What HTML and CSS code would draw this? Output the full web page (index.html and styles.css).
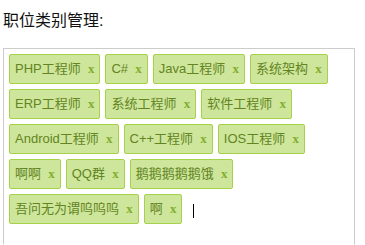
FILE: index.html
```html
<!DOCTYPE html>
<html>
<head>
<meta charset="utf-8">
<link rel="stylesheet" href="styles.css">
</head>
<body>
<div class="page">
  <div class="title">职位类别管理:</div>
  <div class="tagsinput">
    <span class="tag"><span class="label">PHP工程师&nbsp;&nbsp;</span><a class="rm">x</a></span>
    <span class="tag"><span class="label">C#&nbsp;&nbsp;</span><a class="rm">x</a></span>
    <span class="tag"><span class="label">Java工程师&nbsp;&nbsp;</span><a class="rm">x</a></span>
    <span class="tag"><span class="label">系统架构&nbsp;&nbsp;</span><a class="rm">x</a></span>
    <span class="tag"><span class="label">ERP工程师&nbsp;&nbsp;</span><a class="rm">x</a></span>
    <span class="tag"><span class="label">系统工程师&nbsp;&nbsp;</span><a class="rm">x</a></span>
    <span class="tag"><span class="label">软件工程师&nbsp;&nbsp;</span><a class="rm">x</a></span>
    <span class="tag"><span class="label">Android工程师&nbsp;&nbsp;</span><a class="rm">x</a></span>
    <span class="tag"><span class="label">C++工程师&nbsp;&nbsp;</span><a class="rm">x</a></span>
    <span class="tag"><span class="label">IOS工程师&nbsp;&nbsp;</span><a class="rm">x</a></span>
    <span class="tag"><span class="label">啊啊&nbsp;&nbsp;</span><a class="rm">x</a></span>
    <span class="tag"><span class="label">QQ群&nbsp;&nbsp;</span><a class="rm">x</a></span>
    <span class="tag"><span class="label">鹅鹅鹅鹅鹅饿&nbsp;&nbsp;</span><a class="rm">x</a></span>
    <span class="tag"><span class="label">吾问无为谓呜呜呜&nbsp;&nbsp;</span><a class="rm">x</a></span>
    <span class="tag"><span class="label">啊&nbsp;&nbsp;</span><a class="rm">x</a></span>
    <div class="input"><span class="caret"></span></div>
  </div>
</div>
</body>
</html>
```

FILE: styles.css
```css
html, body {
  margin: 0;
  padding: 0;
  background: #fff;
}
.page {
  padding: 0 3px;
  font-family: "Liberation Sans", "Noto Sans CJK SC", sans-serif;
}
.title {
  font-size: 16px;
  line-height: 20px;
  color: #111;
  margin: 11px 0 17px;
}
.tagsinput {
  box-sizing: border-box;
  width: 352px;
  height: 197px;
  border: 1px solid #ccc;
  border-bottom-color: transparent;
  background: #fff;
  padding: 5px;
  display: flex;
  flex-wrap: wrap;
  align-content: flex-start;
}
.tag {
  display: flex;
  align-items: center;
  border: 1px solid #a5d24a;
  border-radius: 2px;
  padding: 5px;
  background: #cde69c;
  color: #638421;
  font-size: 13px;
  line-height: 18px;
  margin: 0 5px 5px 0;
  white-space: nowrap;
}
.rm {
  font-family: "Liberation Serif", serif;
  font-weight: bold;
  font-size: 13px;
  color: #82ad2b;
}
.input {
  border: 1px solid transparent;
  padding: 5px;
  width: 80px;
  height: 18px;
  margin: 0 5px 5px 0;
  display: flex;
  align-items: center;
}
.caret {
  display: block;
  width: 1px;
  height: 14px;
  background: #000;
  margin-top: 3px;
}
```
